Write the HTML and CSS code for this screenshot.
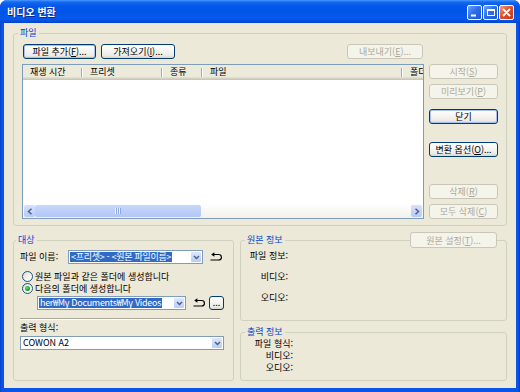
FILE: index.html
```html
<!DOCTYPE html>
<html lang="ko">
<head>
<meta charset="utf-8">
<title>비디오 변환</title>
<link rel="stylesheet" href="styles.css">
</head>
<body>
<div class="window">
  <div class="titlebar">
    <span class="title">비디오 변환</span>
    <div class="tbtns">
      <span class="tb min"><svg width="13" height="13" viewBox="0 0 13 13"><rect x="3" y="8.5" width="5" height="2" fill="#fff"/></svg></span>
      <span class="tb max"><svg width="13" height="13" viewBox="0 0 13 13"><rect x="3.5" y="3.5" width="7" height="6" fill="none" stroke="#fff" stroke-width="1"/><rect x="3" y="3" width="8" height="2" fill="#fff"/></svg></span>
      <span class="tb close"><svg width="13" height="13" viewBox="0 0 13 13"><path d="M3.5 3.5l6 6M9.5 3.5l-6 6" stroke="#fff" stroke-width="1.8" stroke-linecap="round"/></svg></span>
    </div>
  </div>
  <div class="client">
    <fieldset class="grp files">
      <legend>파일</legend>
      <div class="files-main">
        <div class="files-left">
          <div class="btnrow">
            <button class="btn def b-add">파일 추가(<u>F</u>)...</button>
            <button class="btn b-imp">가져오기(<u>I</u>)...</button>
            <button class="btn dis b-exp">내보내기(<u>E</u>)...</button>
          </div>
          <div class="list">
            <div class="lhead">
              <span class="col c1">재생 시간</span>
              <span class="col c2">프리셋</span>
              <span class="col c3">종류</span>
              <span class="col c4">파일</span>
              <span class="col c5">폴더</span>
            </div>
            <div class="lbody"></div>
            <div class="hscroll">
              <span class="sbtn"><svg width="6" height="7" viewBox="0 0 6 7"><path d="M4.5 0.8L1.5 3.5l3 2.7" fill="none" stroke="#4D6185" stroke-width="1.5"/></svg></span>
              <span class="thumb"><span class="grip"></span></span>
              <span class="track"></span>
              <span class="sbtn"><svg width="6" height="7" viewBox="0 0 6 7"><path d="M1.5 0.8l3 2.7-3 2.7" fill="none" stroke="#4D6185" stroke-width="1.5"/></svg></span>
            </div>
          </div>
        </div>
        <div class="rbtns">
          <button class="btn dis r-start">시작(<u>S</u>)</button>
          <button class="btn dis r-prev">미리보기(<u>P</u>)</button>
          <button class="btn def r-close">닫기</button>
          <button class="btn r-opt">변환 옵션(<u>O</u>)...</button>
          <button class="btn dis r-del">삭제(<u>R</u>)</button>
          <button class="btn dis r-delall">모두 삭제(<u>C</u>)</button>
        </div>
      </div>
    </fieldset>

    <div class="bottom">
      <fieldset class="grp target">
        <legend>대상</legend>
        <div class="row fname">
          <span class="lbl-fname">파일 이름:</span>
          <div class="combo c-fname">
            <span class="val"><span class="sel">&lt;프리셋&gt; - &lt;원본 파일이름&gt;</span></span>
            <span class="arrow"><svg width="7" height="5" viewBox="0 0 7 5"><path d="M1 1l2.5 2.5L6 1" fill="none" stroke="#4D6185" stroke-width="1.5"/></svg></span>
          </div>
          <span class="reset"><svg width="13" height="10" viewBox="0 0 13 10"><path d="M4 2.5H8.7A2.75 2.75 0 0 1 8.7 8H0.5" fill="none" stroke="#000" stroke-width="1.2"/><path d="M1.2 2.5L4.4 0.2V4.8Z" fill="#000"/></svg></span>
        </div>
        <label class="row radio-row r1"><span class="radio"></span><span>원본 파일과 같은 폴더에 생성합니다</span></label>
        <label class="row radio-row r2"><span class="radio"><span class="dot"></span></span><span>다음의 폴더에 생성합니다</span></label>
        <div class="row pathrow">
          <div class="combo c-path">
            <span class="val"><span class="sel">her₩My Documents₩My Videos</span></span>
            <span class="arrow"><svg width="7" height="5" viewBox="0 0 7 5"><path d="M1 1l2.5 2.5L6 1" fill="none" stroke="#4D6185" stroke-width="1.5"/></svg></span>
          </div>
          <span class="reset"><svg width="13" height="10" viewBox="0 0 13 10"><path d="M4 2.5H8.7A2.75 2.75 0 0 1 8.7 8H0.5" fill="none" stroke="#000" stroke-width="1.2"/><path d="M1.2 2.5L4.4 0.2V4.8Z" fill="#000"/></svg></span>
          <button class="btn dots">...</button>
        </div>
        <div class="sep"></div>
        <div class="lbl-out">출력 형식:</div>
        <div class="combo c-out">
          <span class="val plain">COWON A2</span>
          <span class="arrow"><svg width="7" height="5" viewBox="0 0 7 5"><path d="M1 1l2.5 2.5L6 1" fill="none" stroke="#4D6185" stroke-width="1.5"/></svg></span>
        </div>
      </fieldset>

      <div class="info">
        <div class="srcwrap">
          <fieldset class="grp src">
            <legend>원본 정보</legend>
            <div class="kv kv-src">
              <span>파일 정보:</span>
              <span>비디오:</span>
              <span>오디오:</span>
            </div>
          </fieldset>
          <button class="btn dis b-srcset">원본 설정(<u>T</u>)...</button>
        </div>
        <fieldset class="grp out">
          <legend>출력 정보</legend>
          <div class="kv kv-out">
            <span>파일 형식:</span>
            <span>비디오:</span>
            <span>오디오:</span>
          </div>
        </fieldset>
      </div>
    </div>
  </div>
</div>
</body>
</html>
```

FILE: styles.css
```css
* { box-sizing: border-box; }
html, body { margin: 0; padding: 0; background: #fff; }
body {
  font-family: "Noto Sans CJK KR", "Noto Sans", sans-serif;
  font-size: 9px;
  line-height: 12px;
  color: #000;
}

.window {
  width: 520px;
  height: 392px;
  display: flex;
  flex-direction: column;
  background: linear-gradient(90deg, #0842C9 0, #0A55E6 2px, #0A55E6 calc(100% - 2px), #0639B8 100%);
  border-radius: 7px 7px 0 0;
  overflow: hidden;
}

.titlebar {
  height: 23px;
  flex: none;
  display: flex;
  align-items: flex-start;
  justify-content: space-between;
  padding: 0 6px 0 7px;
  background: linear-gradient(#4A9AFF 0, #1469F0 2px, #0458E8 6px, #0055E8 12px, #0659EE 18px, #0550E0 21px, #0040C8 23px);
}
.title {
  color: #fff;
  font-weight: bold;
  font-size: 10px;
  line-height: 23px;
  text-shadow: 1px 1px 0 #0A2A8C;
}
.tbtns { display: flex; gap: 1px; margin-top: 5px; }
.tb {
  width: 15px;
  height: 15px;
  border: 1px solid #fff;
  border-radius: 2px;
  display: flex;
  align-items: center;
  justify-content: center;
}
.tb.min, .tb.max { background: linear-gradient(135deg, #6DA3FF 0, #2F6EE8 45%, #1C55D8 100%); }
.tb.close { background: linear-gradient(135deg, #F3A088 0, #E0512A 45%, #C23A15 100%); }

.client {
  flex: 1;
  margin: 0 4px 4px;
  background: #ECE9D8;
  display: flex;
  flex-direction: column;
  padding: 4px 9px 7px;
}

/* group boxes */
.grp {
  margin: 0;
  padding: 0 8px 0 4px;
  border: 1px solid #D0D0BF;
  border-radius: 3px;
  min-width: 0;
}
.grp > legend {
  padding: 0 2px;
  color: #0046D5;
  line-height: 12px;
}

/* buttons */
.btn {
  font: inherit;
  font-size: 9px;
  line-height: 13px;
  height: 15px;
  padding: 0;
  margin: 0;
  color: #000;
  border: 1px solid #003C74;
  border-radius: 3px;
  background: linear-gradient(#FFFFFF 0, #F7F6F2 40%, #ECEBE5 80%, #D8D4C8 100%);
  white-space: nowrap;
  text-align: center;
}
.btn.def { box-shadow: inset 0 0 0 1px #A6C0F2; }
.btn.dis {
  color: #ACA899;
  border-color: #C9C7BA;
  background: #F5F4EA;
}

/* files group */
.files { padding: 5px 8px 6px 4px; }
.files-main {
  margin-left: 4px;
  display: grid;
  grid-template-columns: 402px 1fr;
  column-gap: 5px;
}
.files-left { display: flex; flex-direction: column; }
.btnrow { display: flex; height: 15px; }
.b-add { width: 73px; margin-left: 1px; }
.b-imp { width: 74px; margin-left: 5px; }
.b-exp { width: 76px; margin-left: auto; margin-right: 1px; }

.list {
  margin-top: 5px;
  height: 155px;
  border: 1px solid #7F9DB9;
  background: #fff;
  display: flex;
  flex-direction: column;
  overflow: hidden;
}
.lhead {
  height: 15px;
  flex: none;
  display: flex;
  white-space: nowrap;
  overflow: hidden;
  background: #EBEADB;
  box-shadow: inset 0 -1px #CBC7B8, inset 0 -2px #D6D2C2, inset 0 -3px #E2DECD;
}
.col {
  flex: none;
  padding-left: 7px;
  line-height: 13px;
  background:
    linear-gradient(#ACA899, #ACA899) right 1px top 3px / 1px 9px no-repeat,
    linear-gradient(#fff, #fff) right 0 top 3px / 1px 9px no-repeat;
}
.c1 { width: 60px; }
.c2 { width: 80px; }
.c3 { width: 40px; }
.c4 { width: 200px; }
.c5 { width: 60px; background: none; }
.lbody { flex: 1; }

.hscroll {
  height: 14px;
  flex: none;
  display: flex;
  padding: 1px;
  background: linear-gradient(#FEFEFE, #F2F1EB);
}
.sbtn {
  width: 11px;
  flex: none;
  border-radius: 2px;
  background: linear-gradient(#D6E1FD, #B6CAF7);
  display: flex;
  align-items: center;
  justify-content: center;
}
.thumb {
  width: 166px;
  flex: none;
  border-radius: 2px;
  background: linear-gradient(#C8D8FB, #B2C6F5);
  display: flex;
  align-items: center;
  justify-content: center;
}
.grip {
  width: 6px;
  height: 6px;
  background: repeating-linear-gradient(90deg, #EEF3FF 0 1px, #8CA6E0 1px 2px);
}
.track { flex: 1; }

.rbtns { display: flex; flex-direction: column; padding-top: 20px; }
.rbtns .btn { width: 100%; }
.r-prev { margin-top: 5px; }
.r-close { margin-top: 10px; }
.r-opt { margin-top: 18px; }
.r-del { margin-top: auto; }
.r-delall { margin-top: 5px; }

/* bottom area */
.bottom {
  flex: 1;
  margin-top: 8px;
  display: flex;
  gap: 6px;
}
.target {
  width: 221px;
  flex: none;
  padding: 4px 8px 0 6px;
}
.target > legend { margin-left: -4px; }
.row { display: flex; align-items: center; }
.fname { height: 14px; }
.lbl-fname { width: 48px; flex: none; white-space: nowrap; }
.combo {
  display: flex;
  height: 14px;
  border: 1px solid #7F9DB9;
  background: #fff;
  padding: 1px;
}
.combo .val {
  flex: 1;
  min-width: 0;
  white-space: nowrap;
  line-height: 10px;
}
.combo .sel {
  display: inline-block;
  background: #316AC5;
  color: #fff;
  padding: 0 1px;
  line-height: 10px;
  letter-spacing: -0.3px;
}
.combo .val.plain { padding-left: 1px; }
.combo .arrow {
  width: 10px;
  flex: none;
  border-radius: 1px;
  background: linear-gradient(#DCE6FD, #B9CCF8);
  display: flex;
  align-items: center;
  justify-content: center;
}
.c-fname { width: 135px; }
.reset { display: flex; margin-left: 7px; }

.radio-row { gap: 2px; margin-left: 2px; height: 11px; white-space: nowrap; }
.r1 { margin-top: 7px; }
.r2 { margin-top: 1px; }
.radio {
  width: 11px;
  height: 11px;
  flex: none;
  border-radius: 50%;
  border: 1px solid #1C5180;
  background: linear-gradient(135deg, #DCD9CD 0, #F4F3EE 50%, #fff 100%);
  display: flex;
  align-items: center;
  justify-content: center;
}
.dot {
  width: 5px;
  height: 5px;
  border-radius: 50%;
  background: radial-gradient(circle at 35% 35%, #6BDB68 0, #21A121 60%, #1A8A1A 100%);
}

.pathrow { margin-top: 2px; margin-left: 17px; height: 14px; }
.c-path { width: 149px; }
.pathrow .reset { margin-left: 7px; }
.dots {
  width: 15px;
  height: 14px;
  line-height: 10px;
  margin-left: 3px;
}

.sep {
  height: 2px;
  margin: 8px 5px 0 0;
  border-top: 1px solid #ACA899;
  border-bottom: 1px solid #fff;
}
.lbl-out { margin-top: 2px; line-height: 12px; }
.c-out { margin-top: 2px; width: 204px; }

.info {
  flex: 1;
  display: flex;
  flex-direction: column;
  gap: 5px;
}
.srcwrap { position: relative; height: 87px; flex: none; }
.src { height: 100%; }
.b-srcset {
  position: absolute;
  top: -2px;
  right: 10px;
  width: 87px;
  height: 16px;
}
.out { flex: 1; }

.kv {
  display: grid;
  grid-template-columns: 41px;
  justify-items: end;
  white-space: nowrap;
}
.kv-src { margin: 4px 0 0 2px; row-gap: 9px; }
.kv-out { margin: 0 0 0 8px; grid-template-columns: 40px; }
```
